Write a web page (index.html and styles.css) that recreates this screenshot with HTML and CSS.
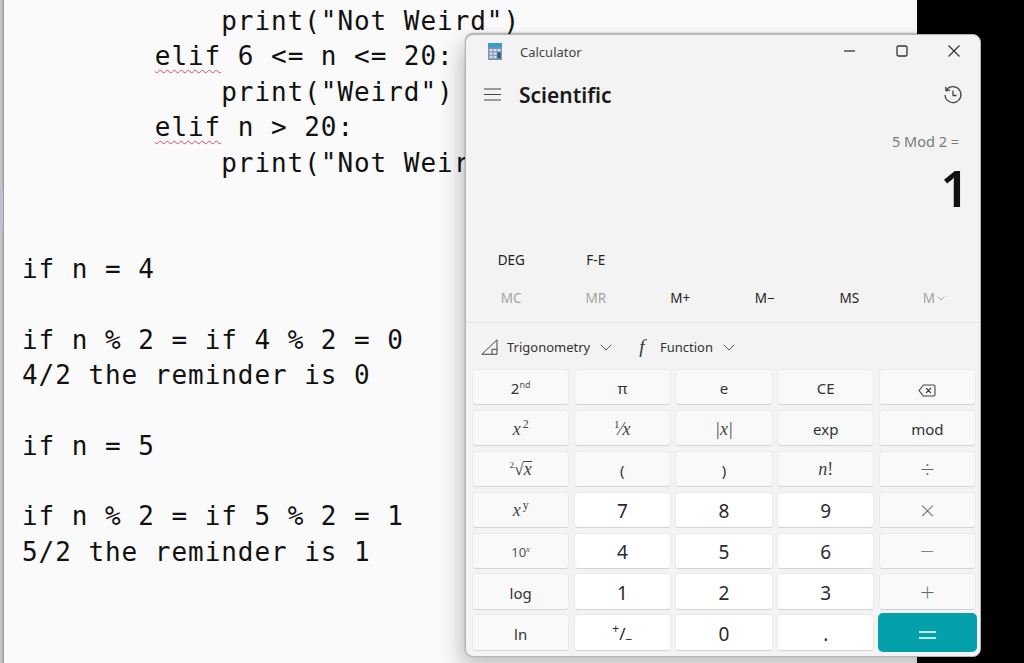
FILE: index.html
```html
<!DOCTYPE html>
<html lang="en">
<head>
<meta charset="utf-8">
<title>Calculator over editor</title>
<link rel="stylesheet" href="styles.css">
</head>
<body>
<div class="desktop">
  <div class="rail"><div class="rail-mark"></div></div>
  <div class="editor">
    <div class="line in-12">print("Not Weird")</div>
    <div class="line in-8"><span class="spell">elif</span><span class="code"> 6 &lt;= n &lt;= 20:</span></div>
    <div class="line in-12">print("Weird")</div>
    <div class="line in-8"><span class="spell">elif</span><span class="code"> n &gt; 20:</span></div>
    <div class="line in-12">print("Not Weird")</div>
    <div class="line"></div>
    <div class="line"></div>
    <div class="line">if n = 4</div>
    <div class="line"></div>
    <div class="line">if n % 2 = if 4 % 2 = 0</div>
    <div class="line">4/2 the reminder is 0</div>
    <div class="line"></div>
    <div class="line">if n = 5</div>
    <div class="line"></div>
    <div class="line">if n % 2 = if 5 % 2 = 1</div>
    <div class="line">5/2 the reminder is 1</div>
  </div>

  <section class="calc">
    <header class="titlebar">
      <svg class="app-icon" width="14" height="17" viewBox="0 0 14 17">
        <rect x="0" y="0" width="14" height="17" fill="#7f93a8"/>
        <rect x="0" y="0" width="14" height="4" fill="#2f9fd0"/>
        <g fill="#d5dde6">
          <rect x="1.5" y="6" width="3" height="2.4"/><rect x="5.5" y="6" width="3" height="2.4"/><rect x="9.5" y="6" width="3" height="2.4"/>
          <rect x="1.5" y="9.4" width="3" height="2.4"/><rect x="5.5" y="9.4" width="3" height="2.4"/>
          <rect x="1.5" y="12.8" width="3" height="2.4"/><rect x="5.5" y="12.8" width="3" height="2.4"/>
        </g>
        <rect x="9.5" y="9.4" width="3" height="5.8" fill="#1f5f8f"/>
      </svg>
      <span class="app-name">Calculator</span>
      <div class="win-controls">
        <svg width="12" height="12" viewBox="0 0 12 12"><path d="M0 6h11" stroke="#333" stroke-width="1.3" fill="none"/></svg>
        <svg width="12" height="12" viewBox="0 0 12 12"><rect x="1" y="1" width="10" height="10" rx="1.6" stroke="#333" stroke-width="1.3" fill="none"/></svg>
        <svg width="12" height="12" viewBox="0 0 12 12"><path d="M.5.5l11 11M11.500.5l-11 11" stroke="#333" stroke-width="1.2" fill="none"/></svg>
      </div>
    </header>

    <div class="modebar">
      <svg class="menu-icon" width="17" height="13" viewBox="0 0 17 13"><path d="M0 1h17M0 6.500h17M0 12h17" stroke="#444" stroke-width="1.2" fill="none"/></svg>
      <h1 class="mode-name">Scientific</h1>
      <svg class="history-icon" width="20" height="20" viewBox="0 0 20 20"><path d="M3.300 5.200A8 8 0 1 1 2 10M2.600 1.800l.5 3.900 3.900-.5M10 5.500V10.500h3.500" stroke="#444" stroke-width="1.300" fill="none"/></svg>
    </div>

    <div class="expression">5 Mod 2 =</div>
    <div class="result">1</div>

    <div class="toggles">
      <button class="flat">DEG</button>
      <button class="flat">F-E</button>
    </div>
    <div class="memory">
      <button class="flat dim">MC</button>
      <button class="flat dim">MR</button>
      <button class="flat">M+</button>
      <button class="flat">M−</button>
      <button class="flat">MS</button>
      <button class="flat dim">M<svg class="mini-chev" width="8" height="5" viewBox="0 0 8 5"><path d="M.5.500L4 4l3.500-3.500" stroke="#aaa" fill="none"/></svg></button>
    </div>

    <div class="menus">
      <svg class="tri-icon" width="17" height="16" viewBox="0 0 17 16"><path d="M.8 15.300L16 .8v14.500zM11 15.300v-5h5" stroke="#444" stroke-width="1" fill="none"/></svg>
      <span class="menu-label trig">Trigonometry</span>
      <svg class="chev" width="12" height="7" viewBox="0 0 12 7"><path d="M.8.800L6 6l5.200-5.200" stroke="#555" fill="none"/></svg>
      <span class="f-mark">f</span>
      <span class="menu-label fn">Function</span>
      <svg class="chev" width="12" height="7" viewBox="0 0 12 7"><path d="M.8.800L6 6l5.200-5.200" stroke="#555" fill="none"/></svg>
    </div>

    <div class="keys">
      <button class="key">2<sup class="tiny">nd</sup></button>
      <button class="key">π</button>
      <button class="key">e</button>
      <button class="key">CE</button>
      <button class="key"><svg class="glyph" width="18" height="13" viewBox="0 0 18 13"><path d="M5.500 1H15.500a1.500 1.500 0 0 1 1.500 1.500v8a1.500 1.500 0 0 1-1.500 1.500H5.500L1 6.500zM8 4l5 5M13 4l-5 5" stroke="#444" stroke-width="1.100" fill="none"/></svg></button>

      <button class="key math">x<sup class="exp">2</sup></button>
      <button class="key math"><sup class="frac">1</sup>⁄x</button>
      <button class="key math">|x|</button>
      <button class="key">exp</button>
      <button class="key">mod</button>

      <button class="key math"><sup class="root">2</sup>√<span class="over">x</span></button>
      <button class="key">(</button>
      <button class="key">)</button>
      <button class="key math">n<span class="upright">!</span></button>
      <button class="key op">÷</button>

      <button class="key math">x<sup class="exp">y</sup></button>
      <button class="key num">7</button>
      <button class="key num">8</button>
      <button class="key num">9</button>
      <button class="key op">×</button>

      <button class="key small">10<sup class="tiny-x">x</sup></button>
      <button class="key num">4</button>
      <button class="key num">5</button>
      <button class="key num">6</button>
      <button class="key op">−</button>

      <button class="key">log</button>
      <button class="key num">1</button>
      <button class="key num">2</button>
      <button class="key num">3</button>
      <button class="key op">+</button>

      <button class="key">ln</button>
      <button class="key num sign"><sup class="tiny-plus">+</sup>/<span class="tiny-minus">−</span></button>
      <button class="key num">0</button>
      <button class="key num">.</button>
      <button class="key equals"><svg class="glyph" width="17" height="8" viewBox="0 0 17 8"><path d="M0 1h17M0 7h17" stroke="#fff" stroke-width="1.300" fill="none"/></svg></button>
    </div>
  </section>
</div>
</body>
</html>
```

FILE: styles.css
```css
* { box-sizing: border-box; }

html, body {
  margin: 0;
  height: 100%;
  overflow: hidden;
  background: #000;
}

.desktop {
  position: relative;
  width: 1024px;
  height: 663px;
  display: flex;
  background: #000;
  overflow: hidden;
}

.rail {
  width: 4px;
  flex: none;
  padding-top: 188px;
  background: linear-gradient(to right, #c4c4c4 0, #c4c4c4 2px, #9d9d9d 3px, #9d9d9d 4px);
}

.rail-mark {
  width: 3px;
  height: 43px;
  background: #bcc2d4;
}

.editor {
  width: 913px;
  height: 663px;
  flex: none;
  padding: 4px 0 0 18px;
  background: #fafafa;
  color: #111;
  font-family: "DejaVu Sans Mono", monospace;
  font-size: 26px;
  letter-spacing: 0.95px;
  overflow: hidden;
}

.line {
  height: 35.400px;
  line-height: 35.400px;
  white-space: pre;
}

.in-8 { padding-left: 132.800px; }
.in-12 { padding-left: 199.200px; }

.spell {
  text-decoration: underline wavy #e0495a 1px;
  text-underline-offset: 4px;
}

.calc {
  position: absolute;
  left: 465px;
  top: 34px;
  width: 516px;
  height: 623px;
  display: flex;
  flex-direction: column;
  background: #f3f3f3;
  border-radius: 8px;
  border: 1px solid #b4b4b4;
  box-shadow: -4px 10px 22px rgba(0,0,0,.24), 0 -1px 2px rgba(0,0,0,.3);
  font-family: "Noto Sans", "Open Sans", sans-serif;
  color: #1b1b1b;
}

.titlebar {
  height: 34px;
  flex: none;
  display: flex;
  align-items: center;
  padding-left: 22px;
}

.app-icon { margin-bottom: 2px; }

.app-name {
  margin-left: 18px;
  font-size: 13px;
  color: #444;
}

.win-controls {
  margin-left: auto;
  display: flex;
  gap: 40px;
  padding: 0 20px 2px 0;
}

.modebar {
  height: 51px;
  flex: none;
  display: flex;
  align-items: center;
  padding: 0 17px 0 18px;
}

.mode-name {
  margin: 0 0 0 18px;
  font-size: 21px;
  font-weight: 600;
  color: #1a1a1a;
}

.history-icon { margin-left: auto; }

.expression {
  margin-top: 11px;
  height: 20px;
  flex: none;
  padding-right: 21px;
  text-align: right;
  font-size: 14.500px;
  line-height: 20px;
  color: #7a7a7a;
}

.result {
  height: 74px;
  flex: none;
  padding-right: 11px;
  text-align: right;
  font-size: 50px;
  line-height: 74px;
  font-weight: 600;
  color: #111;
}

.toggles, .memory {
  display: grid;
  grid-template-columns: repeat(6, 84.500px);
  padding-left: 3px;
  flex: none;
}

.toggles {
  margin-top: 16px;
  height: 38px;
}

.memory {
  height: 44px;
  align-items: start;
  border-bottom: 1px solid #e5e5e5;
}

.flat {
  height: 38px;
  padding: 0;
  border: 0;
  background: none;
  font: inherit;
  font-size: 13.500px;
  color: #222;
  display: flex;
  align-items: center;
  justify-content: center;
}

.flat.dim { color: #a3a3a3; }
.mini-chev { margin-left: 2px; }

.menus {
  height: 46px;
  flex: none;
  display: flex;
  align-items: center;
  padding: 2px 0 0 15px;
}

.menu-label {
  font-size: 13px;
  color: #333;
  margin-left: 9px;
}

.menu-label.trig { width: 83px; white-space: nowrap; }
.menu-label.fn { margin-left: 13px; }

.chev { margin-left: 10px; }

.f-mark {
  margin-left: 25px;
  width: 10px;
  font-family: "Liberation Serif", serif;
  font-style: italic;
  font-size: 19px;
  color: #333;
  text-align: center;
}

.keys {
  display: grid;
  grid-template-columns: repeat(5, 97.300px);
  grid-auto-rows: 36.400px;
  gap: 4.500px 4.400px;
  padding-left: 6px;
}

.key {
  padding: 2px 0 0;
  border: 1px solid #ebebeb;
  border-bottom-color: #d4d4d4;
  border-radius: 4px;
  background: #f9f9f9;
  font: inherit;
  font-size: 15px;
  color: #333;
  text-align: center;
}

.glyph { vertical-align: middle; }

.key.num { background: #fff; font-size: 19px; color: #2b2b2b; }
.key.op { padding: 0; font-size: 26px; line-height: 30px; color: #666; font-weight: 200; }
.key.small { font-size: 13px; color: #555; }

.key.math {
  font-family: "Liberation Serif", serif;
  font-style: italic;
  font-size: 18px;
  color: #444;
}

.key.math sup { line-height: 0; font-style: normal; }
.key.math .exp { font-size: 12px; margin-left: 2px; }
.key.math .root { font-size: 9px; }
.key.math .frac { font-size: 11px; }
.key.math .over { border-top: 1px solid #444; line-height: 15px; display: inline-block; }
.key.math .upright { font-style: normal; }

.tiny { font-size: 9px; line-height: 0; color: #555; }
.tiny-x { font-size: 9px; line-height: 0; font-style: italic; font-family: "Liberation Serif", serif; }

.key.num.sign { font-size: 17px; }
.tiny-plus { font-size: 12px; line-height: 0; }
.tiny-minus { font-size: 12px; position: relative; top: 4px; }

.key.equals {
  margin: -1.500px -1px;
  height: 39.400px;
  width: 99px;
  padding: 0;
  background: #04a0ac;
  border: 0;
  border-radius: 5px;
}
```
